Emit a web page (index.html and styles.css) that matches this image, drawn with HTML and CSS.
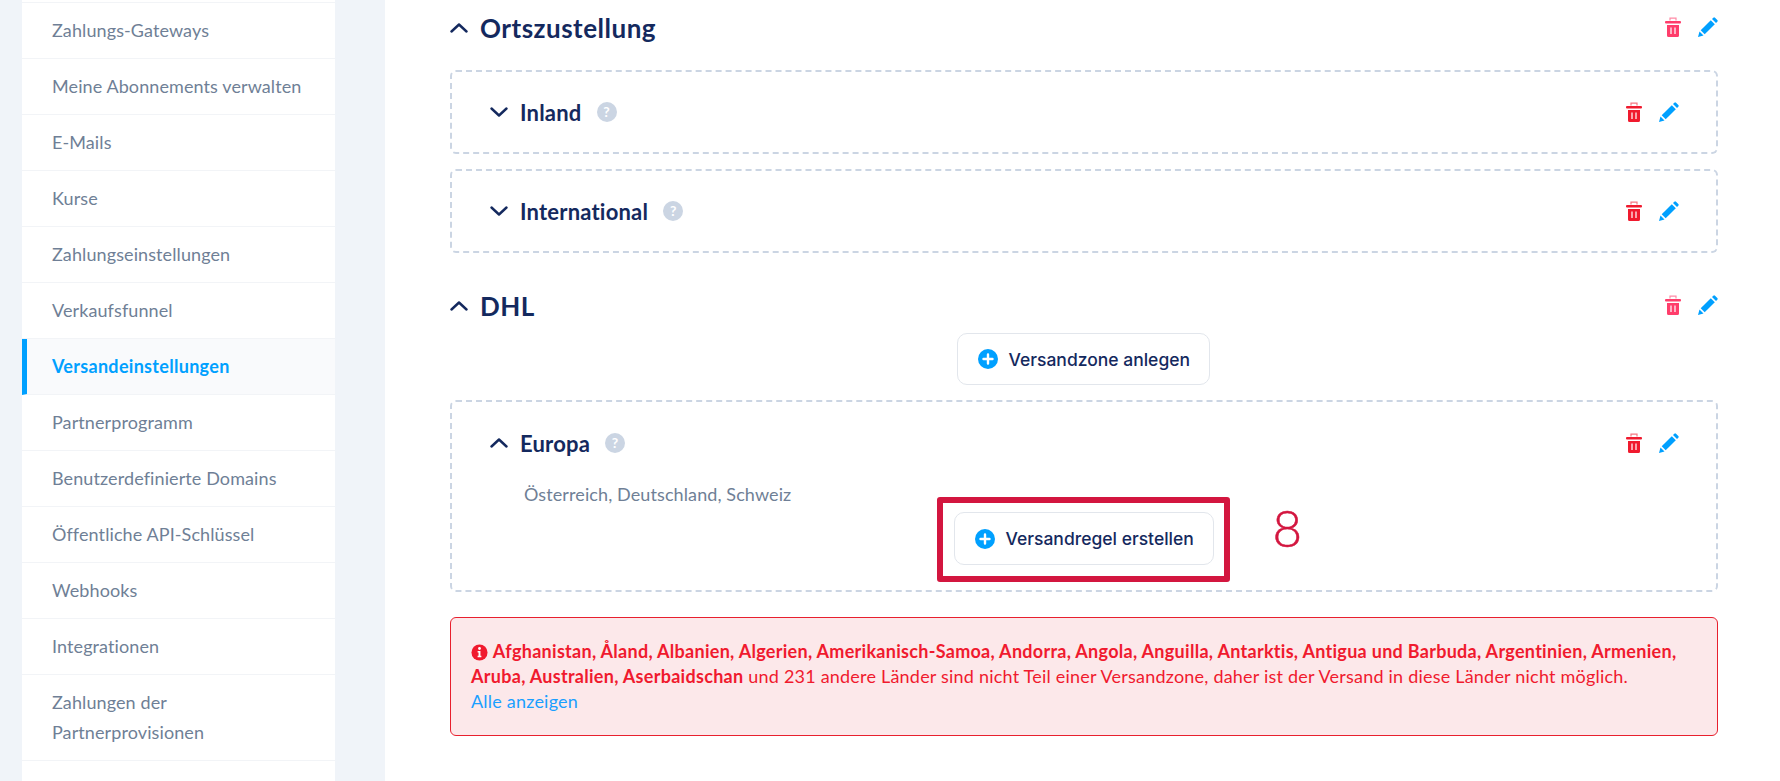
FILE: index.html
```html
<!DOCTYPE html>
<html lang="de">

<head>
    <meta charset="UTF-8">
    <title>Versandeinstellungen</title>
    <link rel="stylesheet" href="styles.css">
</head>

<body>
    <svg class="sprite" width="0" height="0">
        <symbol id="trash" viewBox="0 0 16 20">
            <path d="M5 3.5V1.2h6v2.3" fill="none" stroke="currentColor" stroke-width="1.2" opacity=".6"/>
            <rect x="0" y="4" width="16" height="2.4" rx="1" fill="currentColor"/>
            <path d="M2 8h12v10.5a1.5 1.5 0 0 1-1.5 1.5h-9A1.5 1.5 0 0 1 2 18.500z" fill="currentColor"/>
            <path d="M6 10.500v6.500M10 10.500v6.500" stroke="#fff" stroke-width="1.200"/>
        </symbol>
        <symbol id="pencil" viewBox="0 0 20 20">
            <path d="M0 20l1.500-5.500 4 4z" fill="currentColor"/>
            <path d="M2.700 13.300L12.800 3.200l4 4L6.700 17.300z" fill="currentColor"/>
            <path d="M14 2l1.300-1.300a1.200 1.200 0 0 1 1.700 0l2.300 2.300a1.200 1.200 0 0 1 0 1.700L18 6z" fill="currentColor"/>
        </symbol>
        <symbol id="chevron" viewBox="0 0 18 10">
            <path d="M1.500 8.500L9 1.500l7.500 7" fill="none" stroke="currentColor" stroke-width="2.400" stroke-linecap="round" stroke-linejoin="round"/>
        </symbol>
        <symbol id="plus" viewBox="0 0 20 20">
            <circle cx="10" cy="10" r="10" fill="#00a0ff"/>
            <path d="M10 5.500v9M5.500 10h9" stroke="#fff" stroke-width="2.400" stroke-linecap="round"/>
        </symbol>
    </svg>

    <div class="layout">
        <aside class="side">
            <nav class="nav">
                <a class="nav-item">Zahlungs-Gateways</a>
                <a class="nav-item">Meine Abonnements verwalten</a>
                <a class="nav-item">E-Mails</a>
                <a class="nav-item">Kurse</a>
                <a class="nav-item">Zahlungseinstellungen</a>
                <a class="nav-item">Verkaufsfunnel</a>
                <a class="nav-item active">Versandeinstellungen</a>
                <a class="nav-item">Partnerprogramm</a>
                <a class="nav-item">Benutzerdefinierte Domains</a>
                <a class="nav-item">Öffentliche API-Schlüssel</a>
                <a class="nav-item">Webhooks</a>
                <a class="nav-item">Integrationen</a>
                <a class="nav-item tall">Zahlungen der Partnerprovisionen</a>
            </nav>
        </aside>

        <main class="content">
            <div class="section-head">
                <svg class="chev"><use href="#chevron"/></svg>
                <h2>Ortszustellung</h2>
                <div class="actions">
                    <svg class="ico-trash soft"><use href="#trash"/></svg>
                    <svg class="ico-pencil"><use href="#pencil"/></svg>
                </div>
            </div>

            <div class="zone">
                <div class="zone-head">
                    <svg class="chev flip"><use href="#chevron"/></svg>
                    <h3>Inland</h3>
                    <span class="help">?</span>
                    <div class="actions">
                        <svg class="ico-trash"><use href="#trash"/></svg>
                        <svg class="ico-pencil"><use href="#pencil"/></svg>
                    </div>
                </div>
            </div>

            <div class="zone">
                <div class="zone-head">
                    <svg class="chev flip"><use href="#chevron"/></svg>
                    <h3>International</h3>
                    <span class="help">?</span>
                    <div class="actions">
                        <svg class="ico-trash"><use href="#trash"/></svg>
                        <svg class="ico-pencil"><use href="#pencil"/></svg>
                    </div>
                </div>
            </div>

            <div class="section-head second">
                <svg class="chev"><use href="#chevron"/></svg>
                <h2>DHL</h2>
                <div class="actions">
                    <svg class="ico-trash soft"><use href="#trash"/></svg>
                    <svg class="ico-pencil"><use href="#pencil"/></svg>
                </div>
            </div>

            <div class="center add-zone">
                <button class="btn zone-btn">
                    <svg class="ico-plus"><use href="#plus"/></svg>
                    Versandzone anlegen
                </button>
            </div>

            <div class="zone open">
                <div class="zone-head">
                    <svg class="chev"><use href="#chevron"/></svg>
                    <h3>Europa</h3>
                    <span class="help">?</span>
                    <div class="actions">
                        <svg class="ico-trash"><use href="#trash"/></svg>
                        <svg class="ico-pencil"><use href="#pencil"/></svg>
                    </div>
                </div>
                <p class="countries">Österreich, Deutschland, Schweiz</p>
                <div class="center">
                    <div class="marked">
                        <button class="btn rule-btn">
                            <svg class="ico-plus"><use href="#plus"/></svg>
                            Versandregel erstellen
                        </button>
                        <span class="mark-box"></span>
                        <span class="mark-num">8</span>
                    </div>
                </div>
            </div>

            <div class="alert">
                <svg class="ico-info" viewBox="0 0 18 18">
                    <circle cx="9" cy="9" r="8.500" fill="#f01a2e"/>
                    <circle cx="9" cy="4.800" r="1.500" fill="#fff"/>
                    <path d="M7 7.500h3v5h1v1.500H7v-1.500h1v-3.500H7z" fill="#fff"/>
                </svg>
                <strong>Afghanistan, Åland, Albanien, Algerien, Amerikanisch-Samoa, Andorra, Angola, Anguilla, Antarktis, Antigua und Barbuda, Argentinien, Armenien, Aruba, Australien, Aserbaidschan</strong>
                und 231 andere Länder sind nicht Teil einer Versandzone, daher ist der Versand in diese Länder nicht möglich.
                <a class="show-all">Alle anzeigen</a>
            </div>
        </main>
    </div>
</body>

</html>
```

FILE: styles.css
```css
body {
    margin: 0;
    font-family: Lato, "Open Sans", sans-serif;
    font-size: 18px;
    background-color: #fff;
    overflow: hidden;
}

.sprite {
    display: none;
}

.layout {
    display: flex;
    height: 781px;
}

/* sidebar */
.side {
    width: 385px;
    flex-shrink: 0;
    box-sizing: border-box;
    padding: 0 50px 0 22px;
    background-color: #f0f4f9;
}

.nav {
    height: 100%;
    padding-top: 2px;
    box-sizing: border-box;
    background-color: #fff;
}

.nav-item {
    display: flex;
    align-items: center;
    box-sizing: border-box;
    height: 56px;
    padding: 0 30px 2px;
    line-height: 30px;
    letter-spacing: .1px;
    color: #6f7f96;
    border-bottom: 1px solid #f2f4f7;
}

.nav-item:first-child {
    height: 57px;
    border-top: 1px solid #f2f4f7;
}

.nav-item.active {
    padding-left: 25px;
    font-weight: 700;
    letter-spacing: .3px;
    color: #00a0ff;
    background-color: #f9fafc;
    border-left: 5px solid #00a0ff;
}

.nav-item.tall {
    height: 86px;
}

/* main column */
.content {
    flex: 1;
    min-width: 0;
    padding: 8px 62px 0 65px;
}

.section-head,
.zone-head {
    display: flex;
    align-items: center;
    height: 40px;
}

.section-head {
    margin-bottom: 22px;
}

.section-head.second {
    margin: 33px 0 7px;
}

.section-head .actions {
    margin-bottom: 3px;
}

h2 {
    margin: 0 0 0 12px;
    font-size: 26px;
    font-weight: 700;
    letter-spacing: .5px;
    color: #14295e;
}

h3 {
    margin: 0 0 0 12px;
    font-size: 22px;
    font-weight: 700;
    letter-spacing: .2px;
    color: #14295e;
}

.chev {
    width: 18px;
    height: 10px;
    flex-shrink: 0;
    color: #14295e;
}

.chev.flip {
    transform: rotate(180deg);
}

.help {
    width: 20px;
    height: 20px;
    margin-left: 15px;
    border-radius: 50%;
    background-color: #cbd5e3;
    color: #fff;
    font-size: 14px;
    font-weight: 700;
    line-height: 20px;
    text-align: center;
}

.actions {
    display: flex;
    align-items: center;
    gap: 17px;
    margin-left: auto;
}

.ico-trash {
    width: 16px;
    height: 20px;
    color: #f01a2e;
}

.ico-trash.soft {
    color: #ff3d6b;
}

.ico-pencil {
    width: 20px;
    height: 20px;
    color: #00a0ff;
}

.ico-plus {
    width: 20px;
    height: 20px;
    flex-shrink: 0;
}

.zone {
    box-sizing: border-box;
    height: 84px;
    margin-bottom: 15px;
    padding: 20px 37px 0 38px;
    border: 2px dashed #cbd5e3;
    border-radius: 6px;
}

.zone.open {
    height: 192px;
    margin-bottom: 25px;
    padding-top: 21px;
}

.countries {
    margin: 19px 0 6px 34px;
    line-height: 24px;
    letter-spacing: .1px;
    color: #6f7f96;
}

.center {
    display: flex;
    justify-content: center;
    padding-right: 2px;
}

.add-zone {
    margin-bottom: 15px;
}

.btn {
    display: flex;
    align-items: center;
    gap: 11px;
    box-sizing: border-box;
    padding: 0 20px;
    font-family: Inter, sans-serif;
    font-size: 17.5px;
    font-weight: 500;
    color: #14295e;
    background-color: #fff;
    border: 1px solid #e2e6ec;
    border-radius: 10px;
    white-space: nowrap;
}

.zone-btn {
    width: 253px;
    height: 52px;
}

.rule-btn {
    width: 260px;
    height: 53px;
}

.marked {
    position: relative;
}

.mark-box {
    position: absolute;
    top: -15px;
    right: -16px;
    bottom: -17px;
    left: -17px;
    border: 6px solid #d3163f;
    border-radius: 3px;
}

.mark-num {
    position: absolute;
    top: -14px;
    left: 319px;
    font-size: 51px;
    font-weight: 300;
    -webkit-text-stroke: .5px #d3163f;
    line-height: 60px;
    color: #d3163f;
}

.alert {
    box-sizing: border-box;
    height: 119px;
    padding: 21px 20px;
    line-height: 25px;
    letter-spacing: .21px;
    color: #f01a2e;
    background-color: #fce8ea;
    border: 1px solid #e8202e;
    border-radius: 6px;
}

.alert strong {
    letter-spacing: .29px;
}

.ico-info {
    width: 17px;
    height: 17px;
    vertical-align: -3px;
}

.show-all {
    display: block;
    color: #1a9fff;
}
```
